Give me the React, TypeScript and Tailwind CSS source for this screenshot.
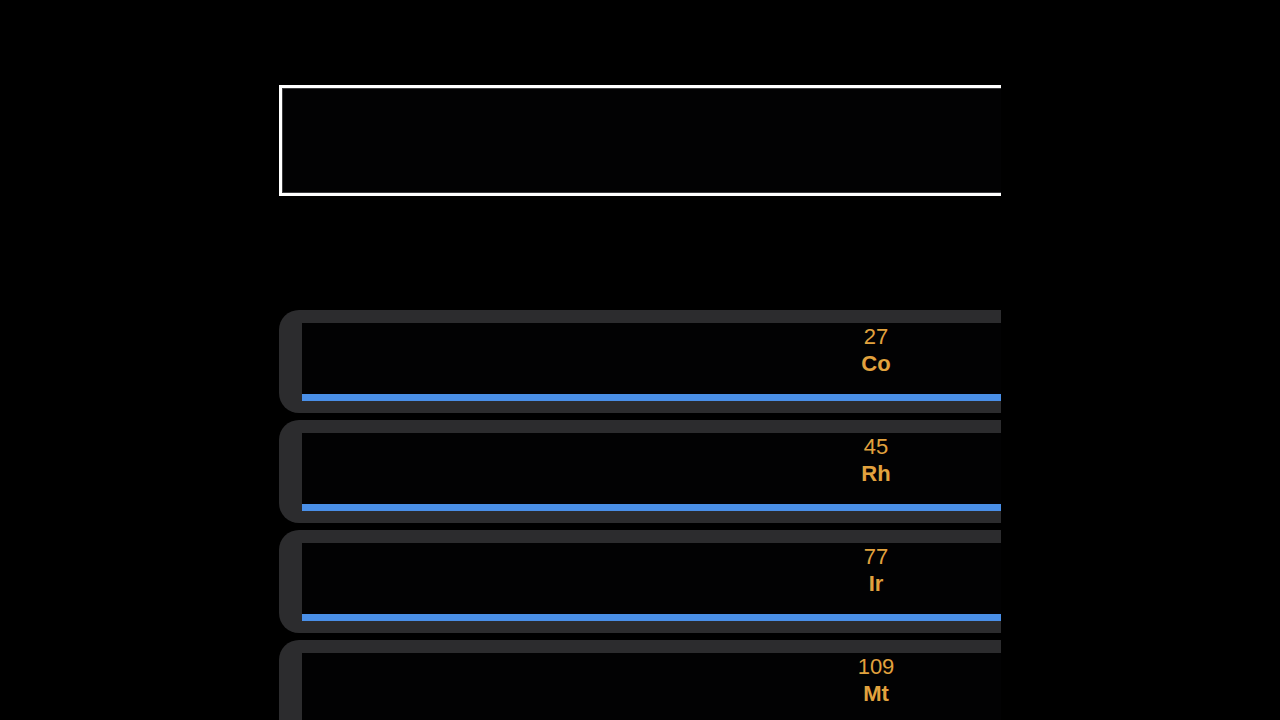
import React from "react";

type Element = {
  number: number;
  symbol: string;
};

// group 9 column
const elements: Element[] = [
  { number: 27, symbol: "Co" },
  { number: 45, symbol: "Rh" },
  { number: 77, symbol: "Ir" },
  { number: 109, symbol: "Mt" },
];

function ElementRow({ item }: { item: Element }) {
  return (
    <div className="w-[760px] shrink-0 rounded-l-[20px] bg-[#2c2c2e] pl-[23px] pt-[13px] pb-[12px]">
      <div className="h-[71px] bg-[#020203]">
        <div className="ml-[539px] w-[70px] text-center text-[22px] leading-[27px] text-[#e2a23e]">
          <div className="font-normal">{item.number}</div>
          <div className="font-bold">{item.symbol}</div>
        </div>
      </div>
      <div className="h-[7px] bg-[#4a8fe7]" />
    </div>
  );
}

export default function App() {
  return (
    <div
      className="h-screen overflow-hidden bg-black"
      style={{ fontFamily: '"Liberation Sans", Arial, sans-serif' }}
    >
      <div className="ml-[279px] w-[722px] overflow-hidden pt-[85px]">
        {/* search / header field */}
        <div className="h-[111px] w-[760px] border-[3px] border-white bg-[#020203] shadow-[inset_0_0_0_1px_#3a3a3c]" />

        {/* element list */}
        <div className="mt-[114px] flex flex-col gap-[7px]">
          {elements.map((item) => (
            <ElementRow key={item.number} item={item} />
          ))}
        </div>
      </div>
    </div>
  );
}
